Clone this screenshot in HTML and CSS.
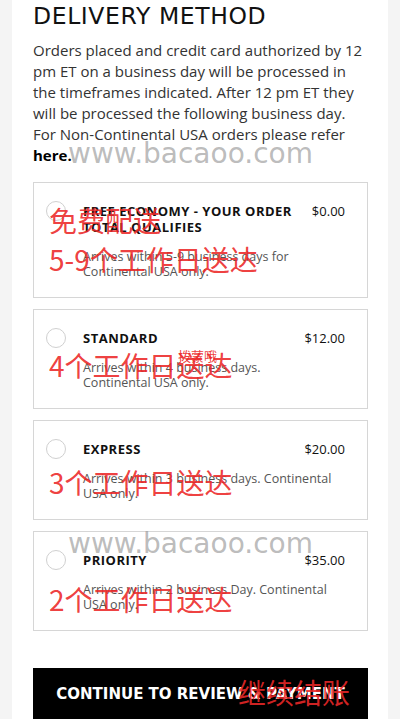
FILE: index.html
```html
<!DOCTYPE html>
<html lang="en">
<head>
    <meta charset="UTF-8">
    <meta name="viewport" content="width=device-width, initial-scale=1.0">
    <title>Delivery Method</title>
    <link rel="stylesheet" href="styles.css">
</head>
<body>
    <div class="panel">
        <h2 class="title">DELIVERY METHOD</h2>
        <p class="intro">Orders placed and credit card authorized by 12<br>pm ET on a business day will be processed in<br>the timeframes indicated. After 12 pm ET they<br>will be processed the following business day.<br>For Non-Continental USA orders please refer<br><a class="intro-link" href="#">here.</a></p>

        <ul class="methods">
            <li class="method">
                <span class="radio"></span>
                <div class="method-body">
                    <div class="method-head">
                        <span class="method-name">FREE ECONOMY - YOUR ORDER TOTAL QUALIFIES</span>
                        <span class="method-price">$0.00</span>
                    </div>
                    <p class="method-desc">Arrives within 5-9 business days for Continental USA only.</p>
                </div>
            </li>
            <li class="method">
                <span class="radio"></span>
                <div class="method-body">
                    <div class="method-head">
                        <span class="method-name">STANDARD</span>
                        <span class="method-price">$12.00</span>
                    </div>
                    <p class="method-desc">Arrives within 4 business days.<br>Continental USA only.</p>
                </div>
            </li>
            <li class="method">
                <span class="radio"></span>
                <div class="method-body">
                    <div class="method-head">
                        <span class="method-name">EXPRESS</span>
                        <span class="method-price">$20.00</span>
                    </div>
                    <p class="method-desc">Arrives within 3 business days. Continental USA only.</p>
                </div>
            </li>
            <li class="method">
                <span class="radio"></span>
                <div class="method-body">
                    <div class="method-head">
                        <span class="method-name">PRIORITY</span>
                        <span class="method-price">$35.00</span>
                    </div>
                    <p class="method-desc">Arrives within 2 business Day. Continental USA only.</p>
                </div>
            </li>
        </ul>

        <button class="continue" type="button">CONTINUE TO REVIEW &amp; PAYMENT</button>

        <!-- watermarks printed over the screenshot -->
        <span class="mark mark-site mark-site-1">www.bacaoo.com</span>
        <span class="mark mark-site mark-site-2">www.bacaoo.com</span>
        <span class="mark mark-red mark-free">免费配送</span>
        <span class="mark mark-red mark-d9">5-9个工作日送达</span>
        <span class="mark mark-red mark-d4">4个工作日送达</span>
        <span class="mark mark-red mark-tiny">拨蒙哦</span>
        <span class="mark mark-red mark-d3">3个工作日送达</span>
        <span class="mark mark-red mark-d2">2个工作日送达</span>
        <span class="mark mark-red mark-pay">继续结账</span>
    </div>
</body>
</html>
```

FILE: styles.css
```css
body {
    margin: 0;
    background-color: #f4f4f4;
    font-family: "Open Sans", Arial, sans-serif;
    color: #222;
}
.panel {
    position: relative;
    margin: 0 12px;
    padding: 0 20px 20px 21px;
    background-color: #fff;
    min-height: 719px;
    box-sizing: border-box;
}
.title {
    margin: 0;
    padding-top: 2px;
    font-family: "DejaVu Sans", sans-serif;
    font-size: 23.5px;
    font-weight: 500;
    line-height: 28px;
    color: #111;
    letter-spacing: 0.6px;
}
.intro {
    margin: 10px 0 0;
    font-size: 15px;
    line-height: 21px;
    color: #333;
    white-space: nowrap;
}
.intro-link {
    color: #000;
    font-weight: 700;
    text-decoration: none;
}
.methods {
    list-style: none;
    margin: 16px 0 0;
    padding: 0;
    display: flex;
    flex-direction: column;
    gap: 11px;
}
.method {
    display: flex;
    align-items: flex-start;
    gap: 17px;
    padding: 20px 22px 18px 12px;
    border: 1px solid #d6d6d6;
}
.radio {
    flex: none;
    width: 18px;
    height: 18px;
    margin-top: -2px;
    border: 1px solid #d0d0d0;
    border-radius: 50%;
}
.method-body {
    flex: 1;
}
.method-head {
    display: flex;
    justify-content: space-between;
    gap: 12px;
}
.method-name {
    font-size: 13px;
    font-weight: 700;
    line-height: 16px;
    letter-spacing: 0.5px;
    color: #111;
}
.method-price {
    font-size: 13px;
    line-height: 16px;
    color: #111;
}
.method-desc {
    margin: 14px 0 0;
    font-size: 12.5px;
    line-height: 15px;
    color: #555;
}
.continue {
    display: block;
    width: 100%;
    margin-top: 37px;
    height: 51px;
    border: none;
    background-color: #000;
    color: #fff;
    font-family: "DejaVu Sans", sans-serif;
    font-size: 15px;
    font-weight: 700;
    cursor: pointer;
}
.mark {
    position: absolute;
    white-space: nowrap;
    pointer-events: none;
}
.mark-site {
    font-family: "DejaVu Sans", sans-serif;
    font-size: 28px;
    line-height: 31px;
    color: rgba(150, 150, 150, 0.65);
}
.mark-site-1 {
    left: 56px;
    top: 138px;
}
.mark-site-2 {
    left: 56px;
    top: 528px;
}
.mark-red {
    font-family: "Noto Sans CJK SC", sans-serif;
    font-size: 28px;
    line-height: 30px;
    color: rgba(236, 40, 40, 0.9);
}
.mark-free {
    left: 37px;
    top: 205px;
}
.mark-d9 {
    left: 37px;
    top: 244px;
}
.mark-d4 {
    left: 37px;
    top: 350px;
}
.mark-tiny {
    left: 166px;
    top: 348px;
    font-size: 13px;
    line-height: 16px;
}
.mark-d3 {
    left: 37px;
    top: 467px;
}
.mark-d2 {
    left: 37px;
    top: 584px;
}
.mark-pay {
    left: 226px;
    top: 677px;
}
```
